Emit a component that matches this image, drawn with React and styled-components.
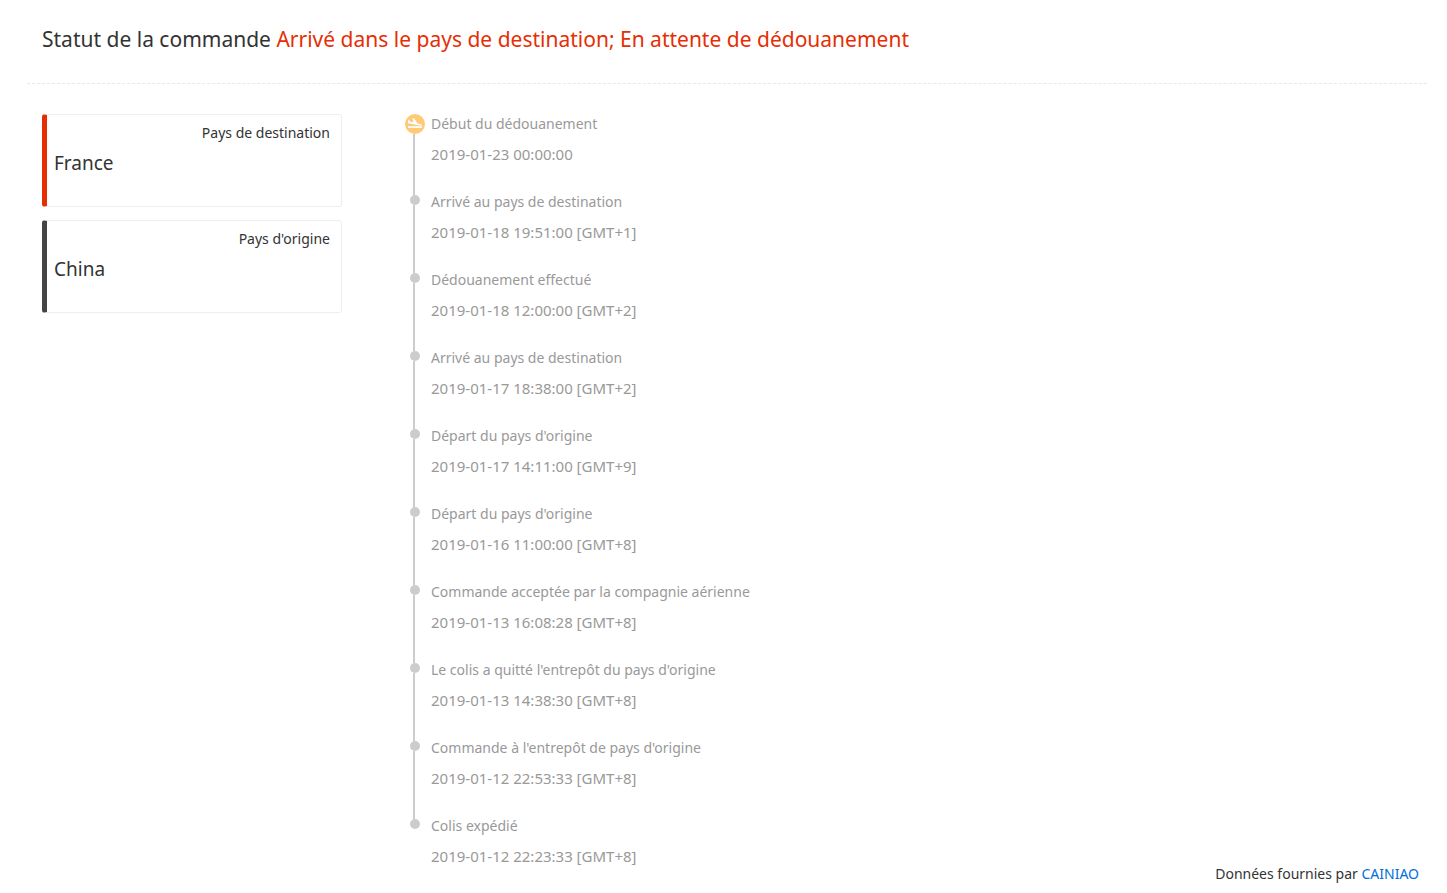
import React from "react";
import styled, { createGlobalStyle } from "styled-components";

const GlobalStyle = createGlobalStyle`
  * { box-sizing: border-box; }
  body {
    margin: 0;
    background: #fff;
    color: #333;
    font-family: "Noto Sans", sans-serif;
    font-size: 14px;
  }
`;

const Page = styled.main`
  padding: 0 20px 0 27px;
`;

const Header = styled.header`
  padding: 23px 15px 28px;
  border-bottom: 1px dashed #e8e8e8;
`;

const Title = styled.h1`
  margin: 0;
  font-size: 21px;
  line-height: 32px;
  font-weight: 400;
`;

const Status = styled.span`
  color: #e62e04;
`;

const Columns = styled.div`
  display: flex;
  gap: 63px;
  padding: 24px 15px 0;
`;

const Countries = styled.aside`
  display: flex;
  flex-direction: column;
  gap: 13px;
  width: 300px;
  padding-top: 6px;
`;

const Card = styled.section`
  display: flex;
  flex-direction: column;
  padding: 8px 11px 23px 7px;
  border: 1px solid #eee;
  border-left: 5px solid ${(p) => p.$accent};
  border-radius: 3px;
`;

const CardLabel = styled.span`
  align-self: flex-end;
  line-height: 20px;
`;

const CountryName = styled.strong`
  font-size: 19px;
  line-height: 40px;
  font-weight: 400;
`;

const Timeline = styled.ol`
  flex: 1;
  margin: 0;
  padding: 0;
  list-style: none;
`;

const Step = styled.li`
  display: flex;
  gap: 6px;
  color: #999;
`;

const Rail = styled.div`
  display: flex;
  flex-direction: column;
  width: 20px;
`;

const Stem = styled.div`
  width: 2px;
  height: 9px;
  margin-left: 8px;
  flex-grow: ${(p) => (p.$grow ? 1 : 0)};
  background: #ccc;
`;

const Dot = styled.div`
  width: 10px;
  height: 10px;
  margin-left: 5px;
  border-radius: 50%;
  background: #ccc;
`;

const Badge = styled.div`
  height: 20px;
  margin-top: 6px;
  border-radius: 50%;
  background: #ffc977;

  svg { display: block; }
`;

const Details = styled.div`
  padding-bottom: ${(p) => (p.$last ? 0 : 16)}px;
  line-height: 31px;
`;

const Label = styled.div``;

const Time = styled.time`
  display: block;
  font-size: 15px;
`;

const Footer = styled.footer`
  padding: 0 8px 8px;
  line-height: 20px;
  margin-top: -8px;
  text-align: right;
`;

const Link = styled.a`
  color: #0070d8;
  text-decoration: none;
`;

const steps = [
  ["Début du dédouanement", "2019-01-23 00:00:00"],
  ["Arrivé au pays de destination", "2019-01-18 19:51:00 [GMT+1]"],
  ["Dédouanement effectué", "2019-01-18 12:00:00 [GMT+2]"],
  ["Arrivé au pays de destination", "2019-01-17 18:38:00 [GMT+2]"],
  ["Départ du pays d'origine", "2019-01-17 14:11:00 [GMT+9]"],
  ["Départ du pays d'origine", "2019-01-16 11:00:00 [GMT+8]"],
  ["Commande acceptée par la compagnie aérienne", "2019-01-13 16:08:28 [GMT+8]"],
  ["Le colis a quitté l'entrepôt du pays d'origine", "2019-01-13 14:38:30 [GMT+8]"],
  ["Commande à l'entrepôt de pays d'origine", "2019-01-12 22:53:33 [GMT+8]"],
  ["Colis expédié", "2019-01-12 22:23:33 [GMT+8]"],
];

function LandingIcon() {
  return (
    <svg width="20" height="20" viewBox="0 0 20 20" fill="#fff" aria-hidden="true">
      <path d="M3 12.2h14v1.7H3z" />
      <path d="M3 5.6l1 .3 1 1.6 3.6 1L7.4 4l1.7.4 3.6 5.1 3.2.8c1.6.5 1.5 1.8 0 1.5L4.4 9.6C3.4 9.3 3 9 3 8.2z" />
    </svg>
  );
}

export default function App() {
  return (
    <Page>
      <GlobalStyle />
      <Header>
        <Title>
          Statut de la commande{" "}
          <Status>Arrivé dans le pays de destination; En attente de dédouanement</Status>
        </Title>
      </Header>
      <Columns>
        <Countries>
          <Card $accent="#e62e04">
            <CardLabel>Pays de destination</CardLabel>
            <CountryName>France</CountryName>
          </Card>
          <Card $accent="#444">
            <CardLabel>Pays d'origine</CardLabel>
            <CountryName>China</CountryName>
          </Card>
        </Countries>
        <Timeline>
          {steps.map(([label, time], i) => {
            const last = i === steps.length - 1;
            return (
              <Step key={time}>
                <Rail>
                  {i === 0 ? <Badge><LandingIcon /></Badge> : <><Stem /><Dot /></>}
                  {!last && <Stem $grow />}
                </Rail>
                <Details $last={last}>
                  <Label>{label}</Label>
                  <Time>{time}</Time>
                </Details>
              </Step>
            );
          })}
        </Timeline>
      </Columns>
      <Footer>
        Données fournies par <Link href="#cainiao">CAINIAO</Link>
      </Footer>
    </Page>
  );
}
